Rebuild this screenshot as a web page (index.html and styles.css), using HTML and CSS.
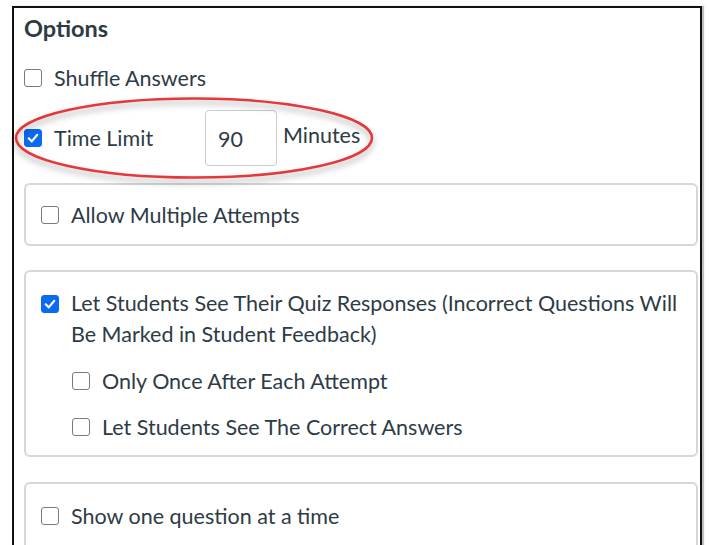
FILE: index.html
```html
<!DOCTYPE html>
<html lang="en">
<head>
<meta charset="utf-8">
<title>Quiz Options</title>
<link rel="stylesheet" href="styles.css">
</head>
<body>
<div class="panel">
  <h2 class="title">Options</h2>

  <div class="row row-shuffle">
    <span class="cb"></span>
    <span class="label">Shuffle Answers</span>
  </div>

  <div class="row row-time">
    <span class="cb checked"><svg viewBox="0 0 18 18"><path d="M4.2 9.4 L7.6 12.8 L13.8 5.4" /></svg></span>
    <span class="label time-label">Time Limit</span>
    <span class="num-input">90</span>
    <span class="label unit">Minutes</span>
  </div>

  <svg class="highlight" viewBox="0 0 362 86" aria-hidden="true">
    <ellipse cx="180" cy="41" rx="178" ry="39.5" />
  </svg>

  <div class="group group-attempts">
    <div class="row">
      <span class="cb"></span>
      <span class="label">Allow Multiple Attempts</span>
    </div>
  </div>

  <div class="group group-responses">
    <div class="row row-top">
      <span class="cb checked"><svg viewBox="0 0 18 18"><path d="M4.2 9.4 L7.6 12.8 L13.8 5.4" /></svg></span>
      <span class="label wrap">Let Students See Their Quiz Responses (Incorrect Questions Will Be Marked in Student Feedback)</span>
    </div>
    <div class="row sub sub-first">
      <span class="cb"></span>
      <span class="label">Only Once After Each Attempt</span>
    </div>
    <div class="row sub sub-second">
      <span class="cb"></span>
      <span class="label">Let Students See The Correct Answers</span>
    </div>
  </div>

  <div class="group group-one">
    <div class="row">
      <span class="cb"></span>
      <span class="label">Show one question at a time</span>
    </div>
  </div>
</div>
</body>
</html>
```

FILE: styles.css
```css
html, body {
  margin: 0;
  padding: 0;
  background: #ffffff;
}

body {
  font-family: Lato, "Open Sans", "Liberation Sans", sans-serif;
  color: #2d3b45;
  overflow: hidden;
}

.panel {
  position: relative;
  margin: 6px 0 0 12px;
  width: 690px;
  height: 560px;
  border: 2px solid #111;
  border-bottom: none;
  box-shadow: 2px 0 1px rgba(0, 0, 0, 0.25);
  padding: 0 6px 0 10px;
  box-sizing: border-box;
}

.title {
  margin: 6px 0 0 0;
  font-size: 23.5px;
  line-height: 28px;
  font-weight: 700;
}

.row {
  display: flex;
  align-items: center;
}

.label {
  font-size: 21.5px;
  line-height: 30px;
  white-space: nowrap;
}

.cb {
  flex: none;
  width: 16px;
  height: 16px;
  border: 1px solid #737d85;
  border-radius: 3px;
  background: #fff;
  margin-right: 12px;
  display: flex;
  align-items: center;
  justify-content: center;
}

.cb.checked {
  background: #0b6af2;
  border-color: #0b6af2;
}

.cb svg {
  width: 16px;
  height: 16px;
}

.cb svg path {
  fill: none;
  stroke: #ffffff;
  stroke-width: 2.4;
  stroke-linecap: round;
  stroke-linejoin: round;
}

.row-shuffle {
  margin-top: 21px;
  height: 30px;
}

.row-time {
  margin-top: 17px;
  height: 56px;
}

.time-label {
  width: 151px;
}

.num-input {
  box-sizing: border-box;
  width: 72px;
  height: 56px;
  border: 1px solid #c7cdd1;
  border-radius: 4px;
  font-size: 21.5px;
  display: flex;
  align-items: center;
  padding-left: 12px;
  padding-top: 1px;
}

.unit {
  margin-left: 6px;
  padding-bottom: 6px;
}

.highlight {
  position: absolute;
  left: 0;
  top: 89px;
  width: 362px;
  height: 86px;
  overflow: visible;
  filter: drop-shadow(0 4px 3px rgba(0, 0, 0, 0.35));
}

.highlight ellipse {
  fill: none;
  stroke: #e3393b;
  stroke-width: 2.6;
}

.group {
  border: 2px solid #d4d8db;
  border-radius: 6px;
  padding-left: 15px;
  box-sizing: border-box;
  width: 674px;
}

.group-attempts {
  margin-top: 17px;
  height: 63px;
  display: flex;
  align-items: center;
}

.group-responses {
  margin-top: 24px;
  height: 187px;
  padding-top: 16px;
}

.row-top {
  align-items: flex-start;
}

.row-top .cb {
  margin-top: 7px;
}

.wrap {
  white-space: normal;
  line-height: 31px;
  padding-right: 8px;
}

.sub {
  margin-left: 31px;
  height: 30px;
}

.sub-first {
  margin-top: 16px;
}

.sub-second {
  margin-top: 16px;
}

.group-one {
  margin-top: 25px;
  height: 70px;
  padding-top: 17px;
}
```
